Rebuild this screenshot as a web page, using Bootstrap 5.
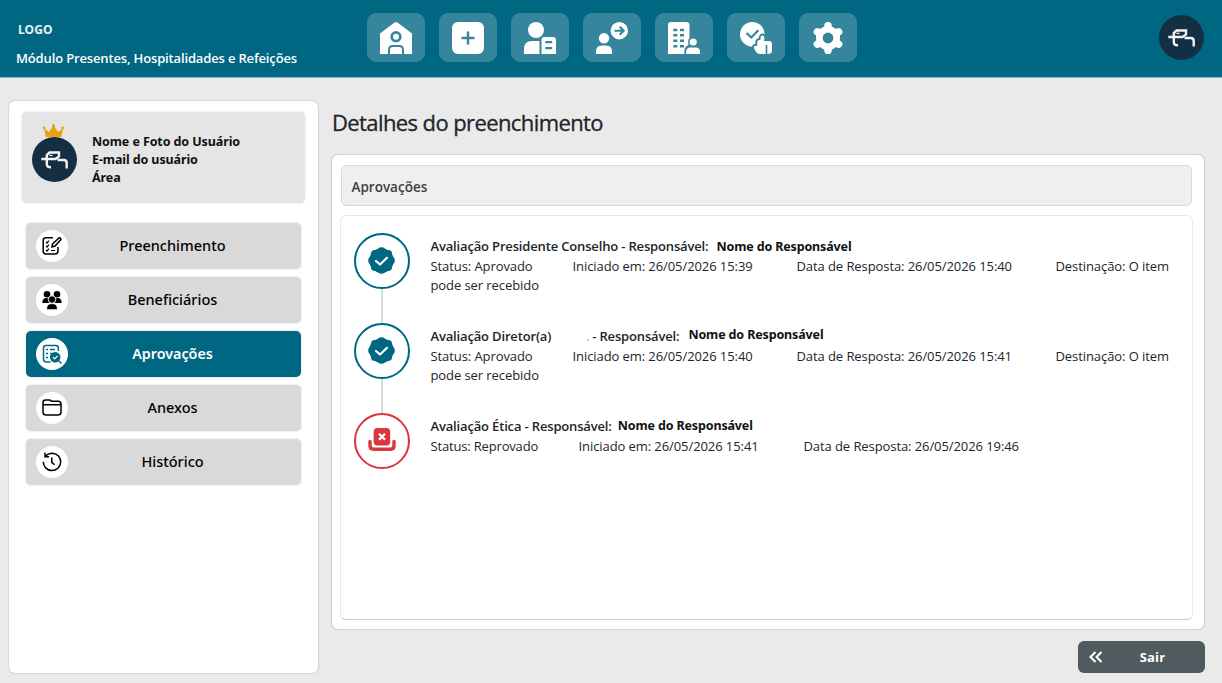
<!DOCTYPE html>
<html lang="pt-BR">
<head>
<meta charset="utf-8">
<meta name="viewport" content="width=device-width, initial-scale=1">
<title>Detalhes do preenchimento</title>
<link href="https://cdn.jsdelivr.net/npm/bootstrap@5.3.0/dist/css/bootstrap.min.css" rel="stylesheet">
<style>
:root{--teal:#006782;--navy:#142f43;--red:#d9363e}
body{background:#eaeaea;font-family:"Open Sans","Noto Sans",sans-serif;color:#212529;height:683px;overflow:hidden}
svg{display:block;flex:none}
.topbar{height:78px;background:var(--teal);border-bottom:1px solid #8fb6c3;display:grid;grid-template-columns:367px 1fr 63px}
.brand-title{padding:21px 0 0 18px;color:#e8f1f4;font:700 12px/18px "Noto Sans",sans-serif;letter-spacing:.1px}
.brand-sub{padding:10px 0 0 16px;color:#fff;font:600 13px/18px "Open Sans",sans-serif;letter-spacing:-.15px;white-space:nowrap}
.app-links{gap:14px;padding-top:13px}
.app-link{width:58px;height:49px;border-radius:9px;background:#35869c;color:#fff}
.user-disc{width:45px;height:45px;background:var(--navy)}
.top-user{padding-top:15px}
.side-panel{width:309px;height:572px;margin:23px 0 0 9px;border-radius:6px;box-shadow:0 0 2px rgba(0,0,0,.3);padding:11px 13px 0 13px}
.user-box{height:91px;border-radius:5px;background:#e5e5e5;box-shadow:0 0 2px rgba(0,0,0,.15);padding-left:10px}
.user-text{font:700 12.5px/18px "Noto Sans",sans-serif;color:#111;padding:21px 0 0 15px;letter-spacing:-.1px}
.avatar-wrap{padding-top:12px;width:45px}
.side-menu{margin:20px 4px 0 4px;gap:8px}
.side-link{height:46px;border-radius:5px;background:#d9d9d9;color:#000;box-shadow:0 0 2px rgba(0,0,0,.2);font:500 14.5px/44px "Noto Sans",sans-serif;padding-left:10px;text-decoration:none}
.side-link.current{background:var(--teal);color:#fff;font-weight:600}
.side-link.current .side-ico{color:var(--teal)}
.side-ico{width:32px;height:32px;background:#fff;color:#000;margin-top:-2px}
.side-ico svg{margin-left:-1px}
.side-label{flex:1;text-align:center;padding-right:24px}
.side-link.current .side-label{font-size:14.3px;line-height:46px}
.main-col{width:872px;margin-left:14px}
.page-title{font:500 22px/30px "Open Sans",sans-serif;letter-spacing:-.6px;-webkit-text-stroke:.3px #212529;margin:29px 0 18px 0;white-space:nowrap}
.detail-card{height:474px;background:#fff;border-radius:6px;box-shadow:0 0 2px rgba(0,0,0,.35);padding:10px 11px 0 8px}
.section-head{height:41px;background:#efefef;border:1px solid #d3dade;border-radius:5px;margin:0 1px;padding:12px 0 0 9.500px;font:600 13.5px/18px "Open Sans",sans-serif;color:#3a3f44}
.timeline{height:405px;margin-top:9px;border:1px solid #e9e9e9;border-bottom-color:#ccc;border-radius:6px;padding:17px 0 0 13px}
.stage{height:90px}
.stage-ring{width:56px;height:56px;border:2px solid var(--teal);color:var(--teal)}
.stage-ring svg{margin:-2px 0 0 -1px}
.stage-ring.denied{border-color:var(--red);color:var(--red)}
.stage-line{width:2px;height:34px;background:#d5dbdf;margin-left:27px}
.stage-body{margin-left:20.5px;width:760px;font:400 13px/19px "Open Sans",sans-serif;padding-top:4px;letter-spacing:-.08px}
.stage-head{font-weight:600;line-height:19px;height:20px;letter-spacing:-.16px;display:flex}
.person{font:700 12.5px/19px "Noto Sans",sans-serif;color:#111;letter-spacing:-.14px;padding-left:8px}
.person.raised{line-height:15px;padding-left:9px}
.person.near{line-height:17px;padding-left:6px}
.speck{color:#bbb;width:41px;padding-left:35px}
.c1{display:inline-block;width:142px}.c2{display:inline-block;width:224px}.c3{display:inline-block;width:259px}
.wide1{width:148px;letter-spacing:-.17px}.wide2{width:225px}
.exit-btn{width:127px;height:32px;border-radius:6px;background:#4f5b5f;color:#fff;margin:12px -1px 0 auto;border:0;padding:0 0 0 11px;font:700 13px/18px "Open Sans",sans-serif}
.exit-label{flex:1;text-align:center;padding-right:3px;padding-bottom:1px;letter-spacing:.2px}
</style>
<script src="https://cdn.jsdelivr.net/npm/bootstrap@5.3.0/dist/js/bootstrap.bundle.min.js"></script>
</head>
<body>
<svg width="0" height="0" class="position-absolute"><defs>
<g id="mascot" fill="none" stroke="#f3f3f3" stroke-width="2.4"><path d="M.3 8h14.200L18 5.500V1.500H8.500L5.800 4v9q0 3.300 4.200 3.300M16.500 9h6.200q3 0 3 3v5.500"/><path d="M8.500 4.400h3" stroke-width="1.300"/></g>
<g id="seal"><g fill="currentColor"><circle cx="13.500" cy="13.500" r="12.300"/><circle cx="13.500" cy="4.300" r="4.100"/><circle cx="13.500" cy="22.700" r="4.100"/><circle cx="4.300" cy="13.500" r="4.100"/><circle cx="22.700" cy="13.500" r="4.100"/><circle cx="7" cy="7" r="4.100"/><circle cx="20" cy="7" r="4.100"/><circle cx="7" cy="20" r="4.100"/><circle cx="20" cy="20" r="4.100"/></g><path d="M8 14l4 3.500 7-6.700" fill="none" stroke="#fff" stroke-width="2.200" stroke-linecap="round" stroke-linejoin="round"/></g>
</defs></svg>
<header class="topbar">
  <div><div class="brand-title">LOGO</div><div class="brand-sub">Módulo Presentes, Hospitalidades e Refeições</div></div>
  <nav class="app-links d-flex align-items-start">
    <a class="app-link d-flex align-items-center justify-content-center"><svg width="32" height="32" viewBox="0 0 32 32"><path fill="#fff" d="M0 11.500L14.500.6q1.500-1.100 3 0L32 11.500V32H0z"/><g fill="none" stroke="#35869c" stroke-width="2.700"><circle cx="16" cy="14.700" r="4.300"/><path d="M9 32v-4q0-4 4-4h6q4 0 4 4v4" stroke-width="2"/></g></svg></a>
    <a class="app-link d-flex align-items-center justify-content-center"><svg width="32" height="32" viewBox="0 0 32 32"><rect width="32" height="32" rx="6" fill="#fff"/><path d="M16 9.500v13M9.500 16h13" stroke="#35869c" stroke-width="2.400"/></svg></a>
    <a class="app-link d-flex align-items-center justify-content-center"><svg width="32" height="32" viewBox="0 0 32 32"><g fill="#fff"><circle cx="12" cy="8" r="8"/><path d="M0 32v-5q0-8 8-8h7.500v13z"/><path fill-rule="evenodd" d="M17.500 32V18q0-3 3-3H29q3 0 3 3v14zM21.300 19v2.200h6.900V19zM21.300 25v2.200h6.900V25z"/></g></svg></a>
    <a class="app-link d-flex align-items-center justify-content-center"><svg width="32" height="32" viewBox="0 0 32 32"><g fill="#fff"><circle cx="8" cy="16.200" r="5.200"/><path d="M0 32v-2.500q0-6 6-6h4q6 0 6 6V32z"/><circle cx="23.300" cy="8.700" r="8.700"/></g><path d="M18.500 8.700h8.500M23.700 4.700l4 4-4 4" fill="none" stroke="#35869c" stroke-width="2.100"/></svg></a>
    <a class="app-link d-flex align-items-center justify-content-center"><svg width="32" height="32" viewBox="0 0 32 32"><path fill="#fff" d="M0 32V3q0-3 3-3h15q3.500 0 3.500 3v13q-2 2-1 7-3 1-4 4v5z"/><path stroke="#35869c" stroke-width="4" stroke-dasharray="2.500 2.900" d="M7.300 6.700v18.700M14 6.700v18.700"/><g fill="#fff"><circle cx="25.200" cy="20" r="3.600"/><path d="M18.200 32v-2q0-4.500 4-4.500h5.600q4.200 0 4.200 4.500v2z"/></g></svg></a>
    <a class="app-link d-flex align-items-center justify-content-center"><svg width="32" height="32" viewBox="0 0 32 32"><circle cx="12.300" cy="12.300" r="12.300" fill="#fff"/><path d="M6.500 11l4.800 4.500 7-7.200" fill="none" stroke="#35869c" stroke-width="2.300"/><path d="M22.200 13.500c2 0 2.600 2 1.800 5.500h5c2.200 0 3 1.500 3 3.200V28c0 3-1.500 4-4 4h-8.500c-1.500 0-2.600-1-3.700-2.500l-1.600-2.700c-1-2 .3-3.300 2-3l1 .2v-3.500c0-2 1.500-2.500 3-2.500.5-1 .2-4.500 2-4.500z" fill="#fff" stroke="#35869c" stroke-width="3.800" paint-order="stroke"/><path d="M26.500 23v9" stroke="#35869c" stroke-width="1.600"/></svg></a>
    <a class="app-link d-flex align-items-center justify-content-center"><svg width="32" height="32" viewBox="0 0 32 32"><g fill="#fff"><circle cx="16" cy="16" r="12"/><rect id="tooth" x="12.300" y="0" width="7.400" height="32" rx="3.600"/><use href="#tooth" transform="rotate(60 16 16)"/><use href="#tooth" transform="rotate(120 16 16)"/></g><circle cx="16" cy="16" r="5.400" fill="#35869c"/></svg></a>
  </nav>
  <div class="top-user"><div class="user-disc rounded-circle d-flex align-items-center justify-content-center"><svg width="28" height="18" viewBox="0 0 28 18"><use href="#mascot"/></svg></div></div>
</header>
<div class="d-flex">
  <aside class="side-panel bg-white">
    <div class="user-box d-flex">
      <div class="avatar-wrap"><svg width="45" height="13" viewBox="0 0 45 13"><path fill="#eba10a" d="M14 14L12 4.500l5 3.500L21.500 1 26 8l5-3.500L29 14z"/><g fill="#eba10a"><circle cx="12.300" cy="4" r="1.400"/><circle cx="21.500" cy="1.500" r="1.500"/><circle cx="30.700" cy="4" r="1.400"/></g></svg><div class="user-disc rounded-circle d-flex align-items-center justify-content-center"><svg width="28" height="18" viewBox="0 0 28 18"><use href="#mascot"/></svg></div></div>
      <div class="user-text">Nome e Foto do Usuário<br>E-mail do usuário<br>Área</div>
    </div>
    <nav class="side-menu d-flex flex-column">
      <a class="side-link d-flex align-items-start"><span class="side-ico mt-auto mb-auto rounded-circle d-flex align-items-center justify-content-center"><svg width="20" height="20" viewBox="0 0 20 20" fill="none" stroke="currentColor" stroke-width="1.500"><path d="M11 1.700H4Q1.200 1.700 1.200 4.500V15Q1.200 18 4 18h9q3 0 3-3v-4M10.500 8l6.700-6.200q1.500 0 1.800 1.800L13 10l-3 1z"/><path stroke-width="1.200" d="M4 6l1 1 2-2.300M4 10l1 1 2-2.300M4 14l1 1 2-2.300M9 14.500h4"/></svg></span><span class="side-label">Preenchimento</span></a>
      <a class="side-link d-flex align-items-start"><span class="side-ico mt-auto mb-auto rounded-circle d-flex align-items-center justify-content-center"><svg width="20" height="20" viewBox="0 0 20 20" fill="currentColor"><circle cx="5" cy="4.200" r="3.300"/><circle cx="15" cy="4.200" r="3.300"/><path d="M.3 13q0-5 4.200-5 1.500 0 1.700.6L7 13zM19.700 13q0-5-4.200-5-1.500 0-1.700.6L13 13z"/><g stroke="#fff" stroke-width=".8"><circle cx="10" cy="9.500" r="3.700"/><path d="M4.700 19.700v-1q0-5 4.500-5h1.600q4.500 0 4.500 5v1z"/></g></svg></span><span class="side-label">Beneficiários</span></a>
      <a class="side-link current d-flex align-items-start"><span class="side-ico mt-auto mb-auto rounded-circle d-flex align-items-center justify-content-center"><svg width="20" height="20" viewBox="0 0 20 20" fill="none" stroke="currentColor" stroke-width="1.500"><path d="M16.300 7V4q0-2.500-2.500-2.500H4Q1.500 1.500 1.500 4v11q0 3 3 3h4"/><path stroke-width="1.300" d="M4 5.500h2M8 5.500h5M4 9.500h2M8 9.500h2M4 13.500h2"/><circle cx="13.200" cy="13.200" r="4.500" fill="currentColor"/><path d="M16.500 16.500l3 3"/><path stroke="#fff" stroke-width="1.200" d="M11 13.200l1.600 1.600 3-3"/></svg></span><span class="side-label">Aprovações</span></a>
      <a class="side-link d-flex align-items-start"><span class="side-ico mt-auto mb-auto rounded-circle d-flex align-items-center justify-content-center"><svg width="20" height="20" viewBox="0 0 20 20" fill="none" stroke="currentColor" stroke-width="1.500"><path d="M1 6V4.500Q1 2 3.500 2H7q1.500 0 2.500 1.200H16q3 0 3 3V14q0 3-3 3H4q-3 0-3-3zM1 6.800h18"/></svg></span><span class="side-label">Anexos</span></a>
      <a class="side-link d-flex align-items-start"><span class="side-ico mt-auto mb-auto rounded-circle d-flex align-items-center justify-content-center"><svg width="20" height="20" viewBox="0 0 20 20" fill="none" stroke="currentColor" stroke-width="1.500"><path d="M3 4.500Q6 1.200 10.500 1.200a8.700 8.700 0 1 1-9.200 8.500M3 .8v4h4M9.800 5.500v4.800l2.800 2.400"/></svg></span><span class="side-label">Histórico</span></a>
    </nav>
  </aside>
  <main class="main-col">
    <h1 class="page-title">Detalhes do preenchimento</h1>
    <section class="detail-card">
      <div class="section-head">Aprovações</div>
      <div class="timeline">
        <div class="stage d-flex"><div><div class="stage-ring rounded-circle d-flex align-items-center justify-content-center"><svg width="27" height="27" viewBox="0 0 27 27"><use href="#seal"/></svg></div><div class="stage-line"></div></div>
          <div class="stage-body"><div class="stage-head"><span>Avaliação Presidente Conselho - Responsável:</span><span class="person">Nome do Responsável</span></div><div><span class="c1">Status: Aprovado</span><span class="c2">Iniciado em: 26/05/2026 15:39</span><span class="c3">Data de Resposta: 26/05/2026 15:40</span>Destinação: O item<br>pode ser recebido</div></div></div>
        <div class="stage d-flex"><div><div class="stage-ring rounded-circle d-flex align-items-center justify-content-center"><svg width="27" height="27" viewBox="0 0 27 27"><use href="#seal"/></svg></div><div class="stage-line"></div></div>
          <div class="stage-body"><div class="stage-head"><span>Avaliação Diretor(a)</span><span class="speck">.</span><span>- Responsável:</span><span class="person raised">Nome do Responsável</span></div><div><span class="c1">Status: Aprovado</span><span class="c2">Iniciado em: 26/05/2026 15:40</span><span class="c3">Data de Resposta: 26/05/2026 15:41</span>Destinação: O item<br>pode ser recebido</div></div></div>
        <div class="stage d-flex"><div><div class="stage-ring denied rounded-circle d-flex align-items-center justify-content-center"><svg width="28" height="24" viewBox="0 0 28 24"><path d="M2 13.500v4.200q0 3.500 3.500 3.500h17q3.500 0 3.500-3.500v-4.200" fill="none" stroke="currentColor" stroke-width="3.400" stroke-linecap="round"/><rect x="5.600" y="0" width="16.600" height="17.600" rx="4" fill="currentColor" stroke="#fff" stroke-width="1" paint-order="stroke"/><path d="M11 5.800l6 6M17 5.800l-6 6" stroke="#fff" stroke-width="2.300"/></svg></div></div>
          <div class="stage-body"><div class="stage-head"><span>Avaliação Ética - Responsável:</span><span class="person near">Nome do Responsável</span></div><div><span class="c1 wide1">Status: Reprovado</span><span class="c2 wide2">Iniciado em: 26/05/2026 15:41</span>Data de Resposta: 26/05/2026 19:46</div></div></div>
      </div>
    </section>
    <button class="exit-btn d-flex align-items-center"><svg width="14" height="12" viewBox="0 0 14 12" fill="none" stroke="#fff" stroke-width="2"><path d="M6.500 1l-5 5 5 5M12.500 1l-5 5 5 5"/></svg><span class="exit-label">Sair</span></button>
  </main>
</div>
</body>
</html>
